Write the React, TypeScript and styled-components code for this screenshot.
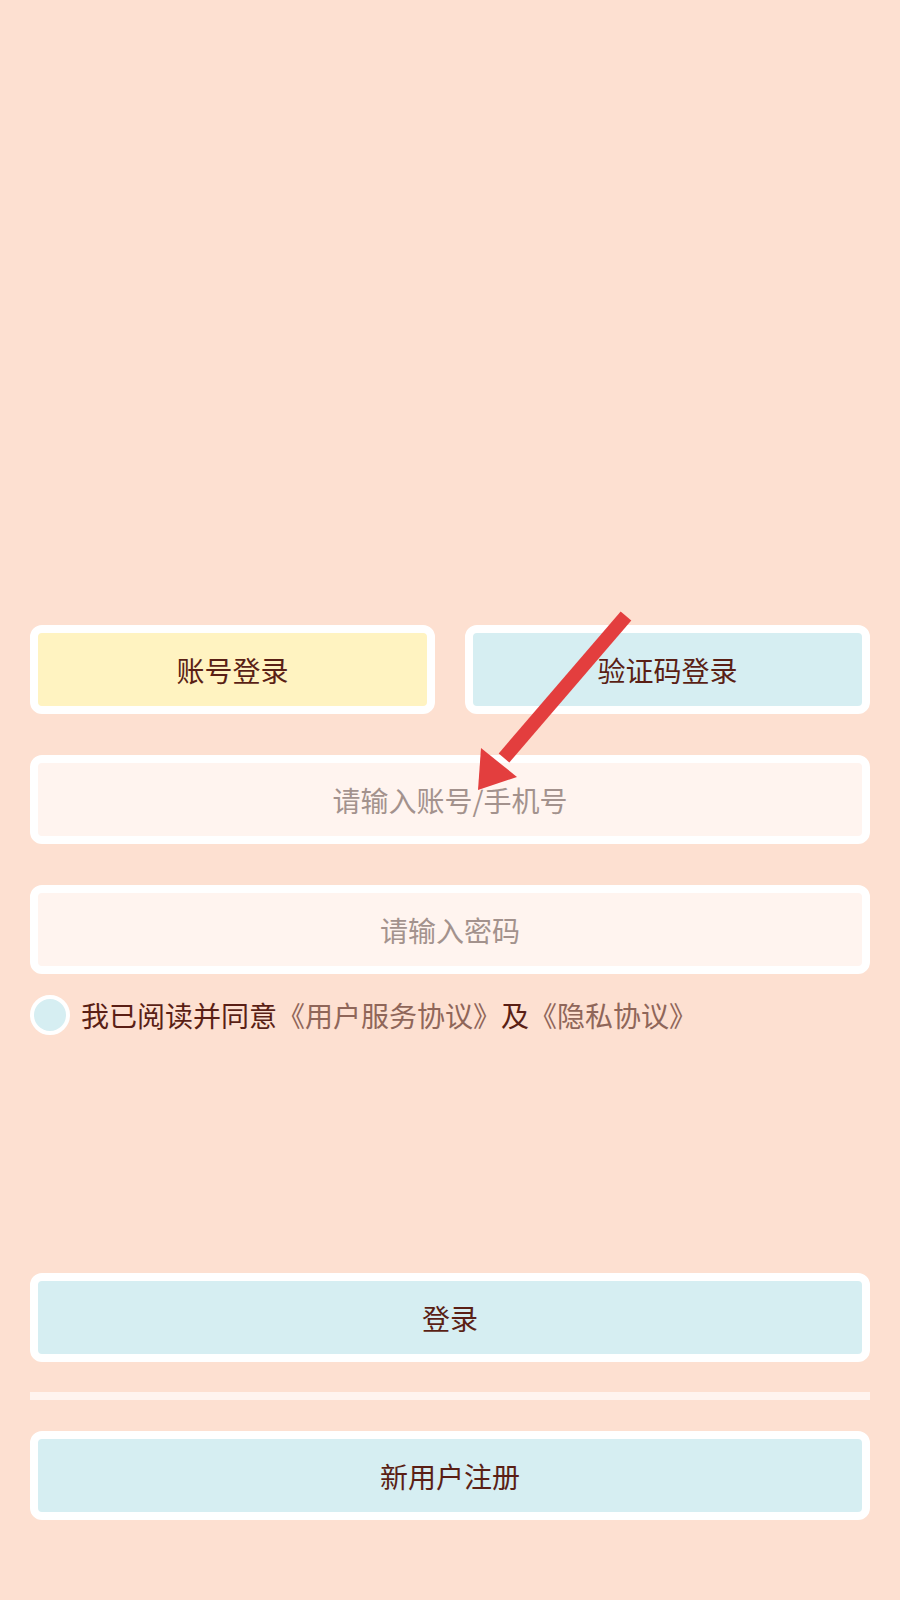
import styled, { createGlobalStyle } from 'styled-components';

const GlobalStyle = createGlobalStyle`
  body {
    margin: 0;
    background: #fde0d1;
    font-family: "Noto Sans CJK SC", "Noto Sans", sans-serif;
  }
`;

const colors = {
  page: '#fde0d1',
  yellow: '#fff3c1',
  blue: '#d6eef2',
  field: '#fff4ef',
  text: '#5a1f15',
  hint: '#a3928d',
  link: '#8f6659',
  arrow: '#e33e3e',
};

const App = () => {
  return (
    <>
      <GlobalStyle />
      <Page>
        <TabRow>
          <Card $bg={colors.yellow}>账号登录</Card>
          <Card $bg={colors.blue}>验证码登录</Card>
        </TabRow>
        <Field placeholder="请输入账号/手机号" />
        <Field type="password" placeholder="请输入密码" />
        <AgreeRow>
          <Radio />
          <span>我已阅读并同意</span>
          <Link>《用户服务协议》</Link>
          <span>及</span>
          <Link>《隐私协议》</Link>
        </AgreeRow>
        <ActionCard $bg={colors.blue}>登录</ActionCard>
        <Divider />
        <Card $bg={colors.blue}>新用户注册</Card>
        <Arrow viewBox="0 0 170 200" width="170" height="200">
          <line x1="156" y1="16" x2="34" y2="158" stroke={colors.arrow} strokeWidth="14" />
          <polygon points="8,190 11,148 47,177" fill={colors.arrow} />
        </Arrow>
      </Page>
    </>
  );
};

const Page = styled.div`
  position: relative;
  min-height: 1600px;
  box-sizing: border-box;
  padding: 625px 30px 0;
  display: flex;
  flex-direction: column;
  background: ${colors.page};
`;

const TabRow = styled.div`
  display: grid;
  grid-template-columns: 1fr 1fr;
  gap: 30px;
`;

const Card = styled.div<{ $bg: string }>`
  height: 89px;
  box-sizing: border-box;
  border: 8px solid #fff;
  border-radius: 12px;
  background: ${({ $bg }) => $bg};
  display: flex;
  align-items: center;
  justify-content: center;
  font-size: 28px;
  color: ${colors.text};
`;

const ActionCard = styled(Card)`
  margin-top: 238px;
`;

const Field = styled.input`
  margin-top: 41px;
  height: 89px;
  box-sizing: border-box;
  border: 8px solid #fff;
  border-radius: 12px;
  background: ${colors.field};
  font-family: inherit;
  font-size: 28px;
  text-align: center;
  color: ${colors.text};
  outline: none;
  padding: 0;

  &::placeholder {
    color: ${colors.hint};
  }
`;

const AgreeRow = styled.div`
  margin-top: 21px;
  height: 40px;
  display: flex;
  align-items: center;
  font-size: 28px;
  color: ${colors.text};
  white-space: nowrap;
`;

const Radio = styled.span`
  width: 40px;
  height: 40px;
  box-sizing: border-box;
  border: 4px solid #fff;
  border-radius: 50%;
  background: ${colors.blue};
  margin-right: 11px;
  flex-shrink: 0;
`;

const Link = styled.span`
  color: ${colors.link};
`;

const Divider = styled.div`
  margin: 30px 0 31px;
  height: 8px;
  background: ${colors.field};
`;

const Arrow = styled.svg`
  position: absolute;
  left: 470px;
  top: 600px;
  pointer-events: none;
`;

export default App;
